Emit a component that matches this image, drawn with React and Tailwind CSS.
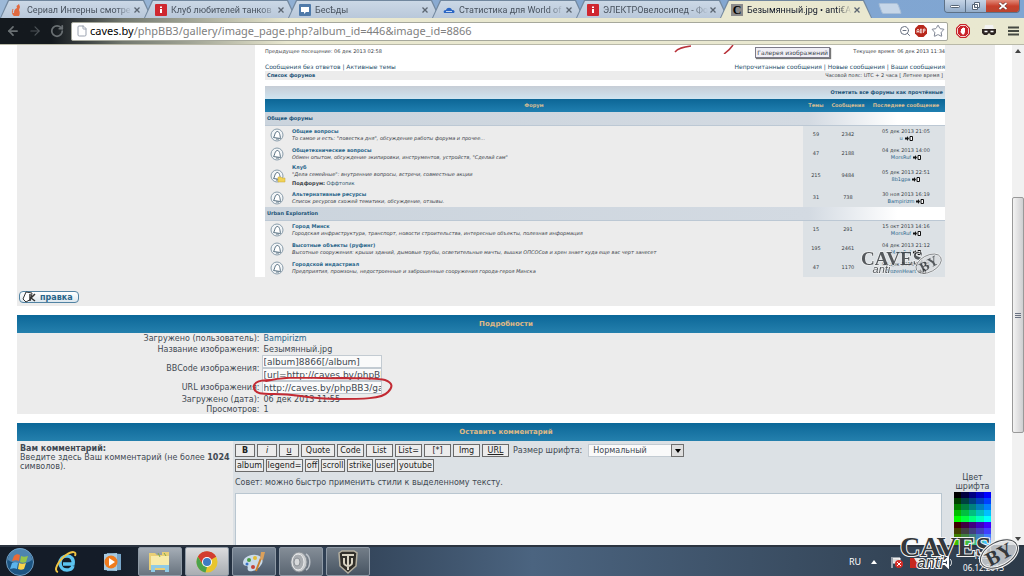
/**
 * Gallery image page
 *
 * Browser window with the image details and the comment form, over the desktop taskbar.
 */
import React from 'react';
import { Star, ZoomOut, ArrowLeft, ArrowRight, RotateCw, File } from 'lucide-react';

const CatIcon = () => (
    <svg viewBox="0 0 12 12" className="size-3">
        <path d="M8 0l1 3-1 3c1 2 1 4 0 6H3c-2-1-2-3 0-3 0-3 1-4 3-5l-.5-2z" fill="#e0693f" />
        <path d="M3 11c-2-1-2-4-1-6" stroke="#e0693f" fill="none" />
    </svg>
);

const RedIcon = () => (
    <svg viewBox="0 0 12 12" className="size-3">
        <rect width="12" height="12" rx="1" fill="#cf2730" />
        <path d="M5 5h2v4H5zM5 2.500h2v1.500H5z" fill="#fff" />
    </svg>
);

const ChatIcon = () => (
    <svg viewBox="0 0 12 12" className="size-3">
        <rect width="12" height="12" rx="1" fill="#4f7aa9" />
        <path d="M2 3h8v5H7L5 10V8H2z" fill="#fff" />
    </svg>
);

const CloudIcon = () => (
    <svg viewBox="0 0 12 12" className="size-3">
        <path d="M1 9c-1-2 0-3 2-3 1-3 5-3 6 0 3 0 3 2 2 3z" fill="#2b66c4" />
        <path d="M3 7.500h6" stroke="#c5d8f2" />
    </svg>
);

const CIcon = () => (
    <span className="flex size-3 items-center justify-center bg-[#8b8b8b] font-['Liberation_Serif',serif] text-xs font-bold leading-3 text-black">C</span>
);

const tabs = [
    { id: 1, title: 'Сериал Интерны смотре', icon: CatIcon },
    { id: 2, title: 'Клуб любителей танков', icon: RedIcon },
    { id: 3, title: 'БесѢды', icon: ChatIcon },
    { id: 4, title: 'Статистика для World of', icon: CloudIcon },
    { id: 5, title: 'ЭЛЕКТРОвелосипед - Фо', icon: RedIcon },
    { id: 6, title: 'Безымянный.jpg • anti€A', icon: CIcon, active: true },
];

const categories = [
    {
        name: 'Общие форумы',
        forums: [
            { title: 'Общие вопросы', text: 'То самое и есть: "повестка дня", обсуждение работы форума и прочее...', topics: 59, posts: 2342, date: '05 дек 2013 21:05', user: 'u' },
            { title: 'Общетехнические вопросы', text: 'Обмен опытом, обсуждение экипировки, инструментов, устройств, "Сделай сам"', topics: 47, posts: 2188, date: '04 дек 2013 14:00', user: 'MorsRuf' },
            { title: 'Клуб', text: '"Дела семейные": внутренние вопросы, встречи, совместные акции', sub: 'Оффтопик', topics: 215, posts: 9484, date: '05 дек 2013 22:51', user: '8b1gpa' },
            { title: 'Альтернативные ресурсы', text: 'Список ресурсов схожей тематики, обсуждение, отзывы.', topics: 31, posts: 738, date: '30 ноя 2013 16:19', user: 'Bampirizm' },
        ],
    },
    {
        name: 'Urban Exploration',
        forums: [
            { title: 'Город Минск', text: 'Городская инфраструктура, транспорт, новости строительства, интересные объекты, полезная информация', topics: 15, posts: 291, date: '15 окт 2013 14:16', user: 'MorsRuf' },
            { title: 'Высотные объекты (руфинг)', text: 'Высотные сооружения: крыши зданий, дымовые трубы, осветительные мачты, вышки ОПСОСов и хрен знает куда еще вас черт занесет', topics: 195, posts: 2461, date: '04 дек 2013 21:12', user: 'MorsRuf' },
            { title: 'Городской индастриал', text: 'Предприятия, промзоны, недостроенные и заброшенные сооружения города-героя Минска', topics: 47, posts: 1170, date: '04 дек 2013 20:15', user: 'FrozenHeart' },
        ],
    },
];

const tagButtons = [
    { label: 'B', className: 'w-5 font-bold' },
    { label: 'i', className: 'w-5 italic' },
    { label: 'u', className: 'w-5 underline' },
    { label: 'Quote', className: 'w-[34px]' },
    { label: 'Code', className: 'w-[27px]' },
    { label: 'List', className: 'w-[27px]' },
    { label: 'List=', className: 'w-[27px]' },
    { label: '[*]', className: 'w-[27px]' },
    { label: 'Img', className: 'w-[27px]' },
    { label: 'URL', className: 'w-[27px] underline' },
];

const extraButtons = [
    { label: 'album', className: 'w-[29px]' },
    { label: 'legend=', className: 'w-[37px]' },
    { label: 'off', className: 'w-3.5' },
    { label: 'scroll', className: 'w-6' },
    { label: 'strike', className: 'w-[26px]' },
    { label: 'user', className: 'w-5' },
    { label: 'youtube', className: 'w-[37px]' },
];

const levels = [0, 64, 128, 191, 255];
const swatches = levels.slice(0, 2).flatMap((r) => levels.flatMap((g) => levels.map((b) => `rgb(${r},${g},${b})`)));

const Watermark = ({ className }) => (
    <svg viewBox="0 0 120 40" className={className}>
        <g stroke="#f4f4f4" strokeWidth="2" paintOrder="stroke" fill="#33373b">
            <text x="0" y="23" fontFamily="Liberation Serif, serif" fontWeight="bold" fontSize="28">CAVES</text>
            <text x="17" y="35" fontFamily="Liberation Sans, sans-serif" fontStyle="italic" fontSize="16">anti</text>
        </g>
        <g transform="rotate(-28 99 21)">
            <ellipse cx="99" cy="21" rx="20" ry="12" fill="#d9dcdf" fillOpacity="0.8" stroke="#f4f4f4" strokeWidth="3" />
            <ellipse cx="99" cy="21" rx="20" ry="12" fill="none" stroke="#4a4e52" />
            <text x="85" y="28" fontFamily="Liberation Serif, serif" fontWeight="bold" fontSize="20" fill="#33373b">BY</text>
        </g>
    </svg>
);

const BellIcon = ({ folder }) => (
    <svg viewBox="0 0 16 14" className="mx-auto h-3.5 w-4">
        <circle cx="7" cy="7" r="6" fill="#f2f5f7" stroke="#8a9dab" />
        <path d="M3.500 9.500C5 8 4.500 4 7 3.500S10 7 10.500 10.500zM6 11h3" fill="#fff" stroke="#5f7686" />
        {folder && <path d="M8 8h3l1 1h3v4H8z" fill="#f1d257" stroke="#c7a63a" strokeWidth="0.500" />}
    </svg>
);

const GotoIcon = () => (
    <svg viewBox="0 0 8 5" className="ml-0.5 inline h-[5px] w-2">
        <path d="M0 1.500h2V0l2 2.500L2 5V3.500H0z" fill="#111" />
        <path d="M5 .5h2.500v4H5z" fill="#fff" stroke="#111" />
    </svg>
);

const TabBar = () => (
    <div className="flex h-[18px] items-end bg-linear-to-r from-[#9db9d8] via-[#86a8d0] to-[#7fa5d2]">
        <nav className="flex">
            {tabs.map(({ id, title, icon: Icon, active }) => (
                <button key={id} className="-mr-2 h-[18px] w-[152px] bg-[#71879e] px-px pt-px [clip-path:polygon(0_100%,8px_0,144px_0,100%_100%)]">
                    <span className={`flex h-full items-center pr-2 pl-2.5 [clip-path:polygon(0_100%,8px_0,142px_0,100%_100%)] ${active ? 'bg-[#e9e8d0] text-gray-900' : 'bg-linear-to-b from-[#cbd8e6] to-[#b9c8da] text-[#48525e]'}`}>
                        <Icon />
                        <span className="ml-1 w-[105px] text-left font-[Roboto,sans-serif] text-[9px] leading-4 whitespace-nowrap mask-r-from-85%">{title}</span>
                        <svg viewBox="0 0 6 6" className="ml-0.5 size-1.5"><path d="M.5.5l5 5M5.500.5l-5 5" stroke="#5b6571" strokeWidth="1.300" /></svg>
                    </span>
                </button>
            ))}
        </nav>
        <button aria-label="Новая вкладка" className="mb-1 ml-4 h-[11px] w-5 -skew-x-[-20deg] rounded-xs border border-[#a9bfd8] bg-[#c6d6e8]" />
        <div className="mr-1 mb-[5px] ml-auto flex h-[13px] overflow-hidden rounded-b border border-t-0 border-[#5d7187] text-white">
            <button aria-label="Свернуть" className="flex w-[21px] items-center justify-center border-r border-[#5d7187] bg-linear-to-b from-[#c5d4e6] to-[#93acc9]">
                <span className="h-[3px] w-2.5 rounded-xs border border-[#566575] bg-white" />
            </button>
            <button aria-label="Развернуть" className="flex w-5 items-center justify-center bg-linear-to-b from-[#c5d4e6] to-[#93acc9]">
                <svg viewBox="0 0 10 10" className="size-2.5"><path d="M3.500 1.500h5v5h-5zM1.500 3.500h5v5h-5z" fill="#fff" stroke="#566575" /><path d="M3.500 5.500h1v1h-1z" fill="#566575" /></svg>
            </button>
            <button aria-label="Закрыть" className="flex w-[33px] items-center justify-center bg-linear-to-b from-[#e08a7a] via-[#c8402c] to-[#b9452f]">
                <svg viewBox="0 0 10 8" className="h-2 w-2.5"><path d="M1.500 1l7 6M8.500 1l-7 6" stroke="#64302c" strokeWidth="3" /><path d="M1.500 1l7 6M8.500 1l-7 6" stroke="#fff" strokeWidth="1.800" /></svg>
            </button>
        </div>
    </div>
);

const Toolbar = () => (
    <div className="flex h-[27px] items-center border-b border-[#b9b9a8] bg-linear-to-r from-[#14191e] from-5% via-[#72786f] via-12% to-[#e9e8d0] to-28% pr-1">
        <div className="flex w-[71px] items-center gap-2 pl-1.5 text-[#6a7073]">
            <button aria-label="Назад"><ArrowLeft className="size-3.5" strokeWidth={3} /></button>
            <button aria-label="Вперёд"><ArrowRight className="size-3.5 text-[#4d5357]" strokeWidth={2} /></button>
            <button aria-label="Обновить"><RotateCw className="size-3.5" strokeWidth={3} /></button>
        </div>
        <div className="flex h-[19px] flex-1 items-center rounded-xs border border-[#a6a89c] bg-white pr-0.5 pl-1">
            <File className="mr-0.5 size-3 text-gray-400" />
            <div className="flex-1 font-['Noto_Sans',sans-serif] text-[11px] leading-4 text-[#808080]">
                <span className="text-black">caves.by</span>/phpBB3/gallery/image_page.php?album_id=446&amp;image_id=8866
            </div>
            <ZoomOut className="mr-1 size-3 text-gray-500" />
            <svg viewBox="0 0 12 12" className="mr-1 size-3">
                <path d="M3.500 0h5L12 3.500v5L8.500 12h-5L0 8.500v-5z" fill="#b8281c" />
                <path d="M2 8V5l1-1 1 1v3M2 6.500h2M5.500 4v4h1l.5-1-.5-1 .5-1-.5-1zM8.500 8V4H10v2H8.500" fill="none" stroke="#fff" strokeWidth="0.700" />
            </svg>
            <Star className="size-3.5 text-gray-500" strokeWidth={1.5} />
        </div>
        <div className="flex w-[72px] items-center justify-between pl-2">
            <svg viewBox="0 0 14 14" className="size-3.5">
                <path d="M4 0h6l4 4v6l-4 4H4l-4-4V4z" fill="#c9242b" />
                <path d="M4.500 1.500h5l3 3v5l-3 3h-5l-3-3v-5z" fill="none" stroke="#fff" strokeWidth="0.800" />
                <path d="M5 7.500V5h1V4h1v-.5h1V4h1v4L8 10.500H6.500L4 7.500z" fill="#fff" />
            </svg>
            <svg viewBox="0 0 14 14" className="size-3.5">
                <path d="M2 6l1-5h8l1 5z" fill="#f3f3f3" />
                <path d="M0 5h14v4l-2 2H9L7 9l-2 2H2L0 9z" fill="#2c2422" />
                <path d="M2.500 7.500h3M8.500 7.500h3" stroke="#fff" strokeWidth="1.500" />
            </svg>
            <svg viewBox="0 0 12 12" className="size-3"><path d="M0 2.500h11M0 6h11M0 9.500h11" stroke="#454942" strokeWidth="2" /></svg>
        </div>
    </div>
);

const ForumTable = () => (
    <table className="w-full table-fixed border-collapse text-center leading-[7px]">
        <colgroup>
            <col className="w-[26px]" />
            <col />
            <col className="w-[26px]" />
            <col className="w-[38px]" />
            <col className="w-[78px]" />
        </colgroup>
        <thead>
            <tr className="h-[13px] bg-linear-to-b from-[#c6cdd6] to-[#cfe4f0]">
                <td colSpan={5} className="pr-0.5 text-right font-bold text-[#1c5377]">
                    <a href="#read">Отметить все форумы как прочтённые</a>
                </td>
            </tr>
            <tr className="h-[13px] bg-linear-to-b from-[#0c6696] to-[#1f7fb0] text-[#d6bd94]">
                <th colSpan={2}>Форум</th>
                <th>Темы</th>
                <th>Сообщения</th>
                <th>Последнее сообщение</th>
            </tr>
        </thead>
        {categories.map((cat) => (
            <tbody key={cat.name}>
                <tr className="h-[13px] bg-linear-to-r from-[#cbd4dd] from-0% via-[#d3dae2] via-80% to-white to-93%">
                    <td colSpan={5} className="border-b border-[#bcc8d4] pl-0.5 text-left font-bold text-[#1c5377]">{cat.name}</td>
                </tr>
                {cat.forums.map((forum) => (
                    <tr key={forum.title} className={forum.sub ? 'h-[25px]' : 'h-[19px]'}>
                        <td className="bg-[#ececec]"><BellIcon folder={forum.sub} /></td>
                        <td className="bg-[#ececec] pl-px text-left">
                            <a href="#forum" className="block font-bold text-[#28658a]">{forum.title}</a>
                            <p className="whitespace-nowrap italic">{forum.text}</p>
                            {forum.sub && <p className="pt-0.5"><b>Подфорум:</b> <a href="#sub" className="text-[#28506b]">{forum.sub}</a></p>}
                        </td>
                        <td className="bg-[#dce1e5]">{forum.topics}</td>
                        <td className="bg-[#dce1e5]">{forum.posts}</td>
                        <td className="bg-[#dce1e5]">
                            <p>{forum.date}</p>
                            <p><a href="#user" className="text-[#28658a]">{forum.user}</a><GotoIcon /></p>
                        </td>
                    </tr>
                ))}
            </tbody>
        ))}
    </table>
);

const UploadedImage = () => (
    <div className="relative mr-[50px] ml-[238px] bg-white pl-2.5 text-[5px] text-[#3a4148]">
        <div className="flex h-3 items-center justify-between">
            <span>Предыдущее посещение: 06 дек 2013 02:58</span>
            <span>Текущее время: 06 дек 2013 11:34</span>
        </div>
        <div className="flex h-3.5 items-end justify-between text-[6px] text-[#28506b]">
            <span>Сообщения без ответов | Активные темы</span>
            <span>Непрочитанные сообщения | Новые сообщения | Ваши сообщения</span>
        </div>
        <div className="mb-1.5 flex h-[9px] items-center justify-between bg-[#ececec] px-0.5">
            <b className="text-[#1c5377]">Список форумов</b>
            <span>Часовой пояс: UTC + 2 часа [ Летнее время ]</span>
        </div>
        <ForumTable />
        <svg viewBox="0 0 60 9" className="absolute top-0 right-[211px] h-[9px] w-[60px]" fill="none" stroke="#b8323a" strokeWidth="1.500">
            <path d="M1 7c3-4 8-5 16-6M50 9c4-3 7-6 9-9" />
        </svg>
        <span className="absolute top-0.5 right-[115px] border border-[#7d7b88] bg-[#f0eff6] px-px text-[6px] leading-[9px] shadow-[1px_1px_1px_#777]">Галерея изображений</span>
        <Watermark className="absolute right-0.5 bottom-0 h-7 w-[82px] opacity-80" />
    </div>
);

const SectionTitle = ({ children }) => (
    <h2 className="mt-[9px] bg-linear-to-b from-[#0a6798] to-[#2480ad] text-center text-[7px] leading-[18px] font-bold text-[#e0ba85]">{children}</h2>
);

const inputStyle = 'block h-[13px] w-[120px] border border-[#c3cbd2] bg-[#fafafa] pl-px text-[9px] leading-[11px]';
const labelStyle = 'w-1/4 pr-0.5 text-right font-normal';

const Details = () => (
    <section>
        <SectionTitle>Подробности</SectionTitle>
        <table className="w-full bg-[#ececec] text-left">
            <tbody>
                <tr className="h-[11px]">
                    <th className={labelStyle}>Загружено (пользователь):</th>
                    <td className="pl-0.5"><a href="#user" className="text-[#28658a]">Bampirizm</a></td>
                </tr>
                <tr className="h-[11px]">
                    <th className={labelStyle}>Название изображения:</th>
                    <td className="pl-0.5">Безымянный.jpg</td>
                </tr>
                <tr>
                    <th className={labelStyle}><label htmlFor="bbcode">BBCode изображения:</label></th>
                    <td>
                        <input id="bbcode" readOnly defaultValue="[album]8866[/album]" className={inputStyle} />
                        <input aria-label="BBCode ссылка" readOnly defaultValue="[url=http://caves.by/phpBB" className={inputStyle} />
                    </td>
                </tr>
                <tr>
                    <th className={labelStyle}><label htmlFor="url">URL изображения:</label></th>
                    <td className="relative">
                        <input id="url" readOnly defaultValue="http://caves.by/phpBB3/ga" className={inputStyle} />
                        <svg viewBox="0 0 146 26" className="absolute -top-1 -left-2.5 h-[26px] w-[146px]" fill="none" stroke="#c22a33" strokeWidth="2" strokeLinecap="round">
                            <path d="M18 3C4 3 1 7 2 11c1 6 8 6 20 6 24 0 34 5 62 5 26 0 46 0 52-7 5-5 5-9-3-12-8-2-24-2-44-2-30 1-50-3-75 3" />
                        </svg>
                    </td>
                </tr>
                <tr className="h-2.5">
                    <th className={labelStyle}>Загружено (дата):</th>
                    <td className="pl-0.5">06 дек 2013 11:55</td>
                </tr>
                <tr className="h-2.5">
                    <th className={labelStyle}>Просмотров:</th>
                    <td className="pl-0.5">1</td>
                </tr>
            </tbody>
        </table>
    </section>
);

const TagButton = ({ label, className }) => (
    <button className={`h-[13px] border border-[#6a6a6a] bg-[#ececec] text-center whitespace-nowrap text-[#222] ${className}`}>{label}</button>
);

const CommentForm = () => (
    <section className="flex flex-1 flex-col">
        <SectionTitle>Оставить комментарий</SectionTitle>
        <div className="flex flex-1">
            <div className="w-[216px] shrink-0 bg-[#ececec] px-[3px] py-[3px]">
                <label htmlFor="comment" className="block font-bold">Вам комментарий:</label>
                <p>Введите здесь Ваш комментарий (не более <b>1024</b> символов).</p>
            </div>
            <div className="flex flex-1 bg-[#dce1e5]">
                <div className="flex flex-1 flex-col pt-[3px] pl-0.5">
                    <div className="flex items-center gap-0.5">
                        {tagButtons.map((btn) => <TagButton key={btn.label} {...btn} />)}
                        <label htmlFor="size" className="pr-1 pl-0.5">Размер шрифта:</label>
                        <div className="relative">
                            <select id="size" className="h-[13px] w-24 appearance-none border border-[#c3cbd2] bg-[#fafafa] pl-1">
                                <option>Нормальный</option>
                            </select>
                            <span className="pointer-events-none absolute top-0 right-0 flex h-[13px] w-[13px] items-center justify-center border border-[#707070] bg-[#dedede]">
                                <svg viewBox="0 0 6 4" className="h-1 w-1.5"><path d="M0 0h6L3 4z" /></svg>
                            </span>
                        </div>
                    </div>
                    <div className="mt-0.5 flex gap-0.5">
                        {extraButtons.map((btn) => <TagButton key={btn.label} {...btn} />)}
                    </div>
                    <p className="my-1.5 leading-[9px]">Совет: можно быстро применить стили к выделенному тексту.</p>
                    <textarea id="comment" className="w-full flex-1 resize-none border border-b-0 border-[#b9c6d0] bg-[#fafafa]" />
                </div>
                <div className="flex w-[53px] flex-col items-center justify-end pl-2">
                    <p className="text-center">Цвет шрифта</p>
                    <div className="mt-px grid h-[53px] w-[38px] auto-rows-[6px] grid-cols-5 overflow-hidden">
                        {swatches.map((color) => <button key={color} aria-label={color} style={{ backgroundColor: color }} />)}
                    </div>
                </div>
            </div>
        </div>
    </section>
);

const Scrollbar = () => (
    <div className="flex w-3 flex-col items-center justify-between bg-[#f1f1f1] py-1">
        <svg viewBox="0 0 6 4" className="h-1 w-1.5"><path d="M0 4h6L3 0z" fill="#444" /></svg>
        <div className="mt-36 mb-[104px] flex w-full flex-1 flex-col items-center justify-center gap-px rounded-xs border border-[#999] bg-linear-to-r from-[#f3f3f3] to-[#cfcfd1]">
            <span className="h-px w-1.5 bg-gray-500" />
            <span className="h-px w-1.5 bg-gray-500" />
            <span className="h-px w-1.5 bg-gray-500" />
        </div>
        <svg viewBox="0 0 6 4" className="h-1 w-1.5"><path d="M0 0h6L3 4z" fill="#444" /></svg>
    </div>
);

const taskButton = 'flex h-[29px] w-11 items-center justify-center rounded-xs border border-[#8f9aa6]';

const Taskbar = () => (
    <footer className="flex h-[31px] items-center border-t-2 border-[#2b3440] bg-linear-to-r from-[#141c28] from-10% via-[#4b6480] via-52% to-[#2c3a49] to-100%">
        <button aria-label="Пуск" className="ml-1.5">
            <svg viewBox="0 0 28 28" className="size-7">
                <circle cx="14" cy="14" r="13.500" fill="#1c5482" stroke="#6f9cc0" />
                <path d="M2 12a12 12 0 0124 0c-7 5-16 5-24 0z" fill="#6fa5cd" opacity="0.600" />
                <path d="M8 8c2-2 4-2 6-1l-1 6c-2-1-4-1-7 0z" fill="#ec6a36" />
                <path d="M15 8c2 1 4 1 7 0l-2 6c-2 1-4 1-6 0z" fill="#96c54a" />
                <path d="M6 15c2-1 4-1 6 0l-1 6c-2-1-4-1-7 0z" fill="#5bb3ec" />
                <path d="M13 15c2 1 4 1 7 0l-2 6c-2 1-4 1-6 0z" fill="#fbd34c" />
            </svg>
        </button>
        <button aria-label="Internet Explorer" className="ml-5">
            <svg viewBox="0 0 24 24" className="size-6" fill="none">
                <path d="M19 16c-1 3-4 4-6 4-4 0-7-3-7-7s3-7 7-7 7 3 6 8H9" stroke="#5cc4f0" strokeWidth="3.500" />
                <path d="M4 22C-1 21 4 11 12 5c6-4 11-4 9 1" stroke="#f0c443" strokeWidth="2" />
            </svg>
        </button>
        <button aria-label="Проигрыватель" className="ml-6">
            <svg viewBox="0 0 20 20" className="size-5">
                <path d="M5 1l14 1v16L5 19z" fill="#78a6c9" />
                <path d="M2 2l13-1v18L2 18z" fill="#a8cbe2" />
                <circle cx="9" cy="10" r="6.500" fill="#ef7b1e" />
                <path d="M7 6l6 4-6 4z" fill="#fff" />
            </svg>
        </button>
        <div className="ml-4 flex gap-[3px]">
            <button aria-label="Проводник" className={`${taskButton} bg-linear-to-b from-[#a5adb6] to-[#69747f]`}>
                <svg viewBox="0 0 26 24" className="h-6 w-[26px]">
                    <path d="M2 3h6l2 2h5V2h7v18H2z" fill="#e9cf75" />
                    <path d="M4 6h18v10H4z" fill="#f8ebaa" />
                    <path d="M4 22v-7h18v7h-4v-4H8v4z" fill="#8fcbe6" />
                    <path d="M11 3l2 4M17 3l2 3" stroke="#7ea74f" />
                </svg>
            </button>
            <button aria-label="Chrome" className={`${taskButton} bg-linear-to-b from-[#dcdcde] to-[#a9adb2]`}>
                <svg viewBox="0 0 22 22" className="size-[22px]">
                    <circle cx="11" cy="11" r="10.500" fill="#e8c52e" />
                    <path d="M11 11L1.900 5.700A10.500 10.500 0 0120.100 5.700z" fill="#d23c2f" />
                    <path d="M11 6h9.300A10.500 10.500 0 001.900 5.700L6.500 13z" fill="#d23c2f" />
                    <path d="M1.900 5.700l4.800 8L11 16l-1.500 5.400A10.500 10.500 0 011.900 5.700z" fill="#4ba24b" />
                    <circle cx="11" cy="11" r="5" fill="#fff" />
                    <circle cx="11" cy="11" r="4" fill="#3e7cc2" />
                </svg>
            </button>
            <button aria-label="Paint" className={`${taskButton} bg-linear-to-b from-[#7b8897] to-[#4c5b6c]`}>
                <svg viewBox="0 0 26 24" className="h-6 w-[26px]">
                    <path d="M2 13c0-5 6-9 13-8 7 1 8 6 5 10-3 5-9 7-12 6-3-2 0-4-2-5-2 0-4-1-4-3z" fill="#c9dbea" />
                    <circle cx="8" cy="10" r="2" fill="#4c9c44" />
                    <circle cx="14" cy="8" r="2" fill="#e4bd35" />
                    <circle cx="6" cy="14" r="1.500" fill="#3c74c4" />
                    <circle cx="12" cy="17" r="2" fill="#c4433a" />
                    <path d="M15 21l5-13" stroke="#c9812f" strokeWidth="2" />
                    <path d="M19 9l1-7 4 0-2 8z" fill="#dba05b" />
                </svg>
            </button>
            <button aria-label="Звук" className={`${taskButton} bg-linear-to-b from-[#848d97] to-[#5b6672]`}>
                <svg viewBox="0 0 24 24" className="size-6" fill="none">
                    <path d="M17 4c5 3 5 13 0 16" stroke="#bcc2c8" strokeWidth="1.500" />
                    <ellipse cx="10" cy="12" rx="8" ry="10" fill="#c8cbcd" stroke="#888f95" />
                    <ellipse cx="9" cy="12" rx="6" ry="8" fill="#a9adb1" stroke="#ecedee" />
                    <ellipse cx="8" cy="12" rx="3" ry="4" fill="#d8dadb" stroke="#8b9095" />
                </svg>
            </button>
            <button aria-label="World of Tanks" className={`${taskButton} bg-linear-to-b from-[#737d88] to-[#485563]`}>
                <svg viewBox="0 0 22 24" className="h-6 w-[22px]">
                    <path d="M2 3l3-2h12l3 2-1 13-8 7-8-7z" fill="#302e29" stroke="#b5b0a0" strokeWidth="1.500" />
                    <path d="M5 5h12M11 5v15M7 8v5c0 2 3 3 4 3s4-1 4-3V8" fill="none" stroke="#d8d3c2" strokeWidth="2" />
                </svg>
            </button>
        </div>
        <div className="mr-5 ml-auto flex items-center font-['Noto_Sans',sans-serif] text-[8px] leading-3 text-white">
            <span className="mr-2.5 text-[9px]">RU</span>
            <svg viewBox="0 0 6 4" className="mr-3 h-1 w-1.5"><path d="M0 4h6L3 0z" fill="#fff" /></svg>
            <svg viewBox="0 0 62 14" className="h-3.5 w-[66px]" fill="none">
                <path d="M1 2v11M2 3h7v5H2" stroke="#fff" fill="#ddd" />
                <circle cx="8" cy="9" r="4" fill="#d52d27" /><path d="M6 7l4 4M10 7l-4 4" stroke="#fff" />
                <path d="M19 3h6l3 4v6h-9z" fill="#c7281f" /><path d="M23 3h6l-3 5z" fill="#e9e9e9" />
                <path d="M38 12V8M41 12V6M44 12V3M51 6h3l3-3v9l-3-3h-3z" stroke="#fff" strokeWidth="2" />
                <path d="M59 4c2 2 2 5 0 7" stroke="#fff" />
            </svg>
            <div className="ml-2 text-center">
                <p>12:55</p>
                <p>06.12.2013</p>
            </div>
        </div>
    </footer>
);

const App = () => {
    return (
        <div className="relative flex h-screen flex-col overflow-hidden bg-white">
            <TabBar />
            <Toolbar />
            <div className="flex min-h-0 flex-1">
                <main className="mx-[17px] flex flex-1 flex-col overflow-hidden font-['DejaVu_Sans',sans-serif] text-[8px] leading-[9px] text-[#414952]">
                    <section className="bg-[#ececec] pb-[3px]">
                        <UploadedImage />
                        <button className="mt-3.5 ml-0.5 flex h-3 w-[60px] items-center rounded border border-[#5183a3] bg-linear-to-b from-white to-[#dce7ee] font-bold text-[#28658a]">
                            <svg viewBox="0 0 18 12" className="mr-0.5 h-3 w-[18px]" fill="none" stroke="#333">
                                <path d="M3 8l3-7 6 1-1 6-5 3z" fill="#fff" />
                                <path d="M10 3v7M15 3l-4 4 4 3" strokeWidth="1.500" />
                            </svg>
                            правка
                        </button>
                    </section>
                    <Details />
                    <CommentForm />
                </main>
                <Scrollbar />
            </div>
            <Taskbar />
            <Watermark className="pointer-events-none absolute right-1 bottom-[3px] h-10 w-[120px]" />
        </div>
    );
};
export default App;
